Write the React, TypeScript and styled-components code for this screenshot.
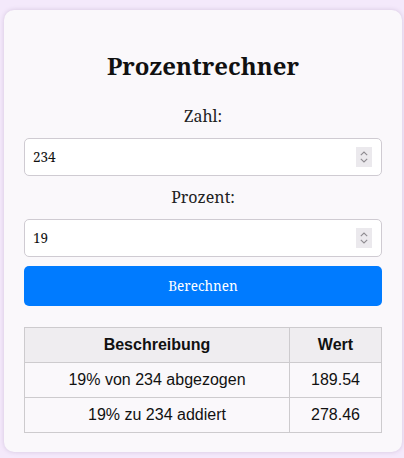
import React, { useState } from 'react';
import styled, { createGlobalStyle } from 'styled-components';

const serif = `"Noto Serif", "DejaVu Serif", serif`;

const GlobalStyle = createGlobalStyle`
  html, body {
    margin: 0;
    padding: 0;
    background-color: #f4e9fb;
    font-family: ${serif};
  }
`;

const Page = styled.div`
  padding: 10px 2px 6px 4px;
`;

const Card = styled.div`
  width: 358px;
  padding: 20px 20px 19px;
  background-color: #faf8fb;
  border-radius: 10px;
  box-shadow: 0 0 4px rgba(120, 90, 140, 0.25);
  display: flex;
  flex-direction: column;
`;

const Title = styled.h1`
  margin: 21px 0 25px;
  font-size: 24px;
  line-height: 30px;
  text-align: center;
  color: #111;
`;

const Label = styled.label<{ $first?: boolean }>`
  display: block;
  text-align: center;
  font-size: 16px;
  line-height: 20px;
  color: #222;
  margin: ${p => (p.$first ? '0 0 12px' : '11px 0 12px')};
`;

const InputBox = styled.div`
  display: flex;
  align-items: center;
  height: 38px;
  box-sizing: border-box;
  border: 1px solid #cfcbd2;
  border-radius: 5px;
  background: #fff;
  padding: 0 9px 0 8px;
`;

const NumberInput = styled.input`
  flex: 1;
  border: none;
  outline: none;
  background: transparent;
  font-family: ${serif};
  font-size: 13.5px;
  color: #111;
  padding: 0;
  -moz-appearance: textfield;
  &::-webkit-outer-spin-button,
  &::-webkit-inner-spin-button {
    -webkit-appearance: none;
    margin: 0;
  }
`;

const Spinner = styled.div`
  width: 16px;
  height: 20px;
  background: #ebe9ed;
  display: flex;
  flex-direction: column;
  align-items: center;
  justify-content: center;
  gap: 2px;
`;

const Button = styled.button`
  margin-top: 9px;
  height: 40px;
  border: none;
  border-radius: 5px;
  background-color: #007bff;
  color: #fff;
  font-family: ${serif};
  font-size: 13.5px;
  cursor: pointer;
`;

const Table = styled.table`
  margin-top: 21px;
  width: 100%;
  border-collapse: collapse;
  font-family: "Liberation Sans", Arial, sans-serif;
  font-size: 16px;
  color: #111;
`;

const Th = styled.th`
  background: #efedf0;
  border: 1px solid #cdcbce;
  height: 34px;
  padding: 0 8px;
  font-weight: bold;
  text-align: center;
`;

const Td = styled.td`
  border: 1px solid #cdcbce;
  height: 34px;
  padding: 0 8px;
  text-align: center;
  background: #faf8fb;
`;

const Chevrons = () => (
  <Spinner>
    <svg width="8" height="5" viewBox="0 0 8 5">
      <path d="M0.8 4.2 L4 1 L7.2 4.2" fill="none" stroke="#8e8b90" strokeWidth="1.1" />
    </svg>
    <svg width="8" height="5" viewBox="0 0 8 5">
      <path d="M0.8 0.8 L4 4 L7.2 0.8" fill="none" stroke="#8e8b90" strokeWidth="1.1" />
    </svg>
  </Spinner>
);

const fmt = (n: number) => n.toFixed(2);

export default function App() {
  const [zahl, setZahl] = useState('234');
  const [prozent, setProzent] = useState('19');
  const [res, setRes] = useState({ z: 234, p: 19 });

  const minus = res.z - (res.z * res.p) / 100;
  const plus = res.z + (res.z * res.p) / 100;

  return (
    <Page>
      <GlobalStyle />
      <Card>
        <Title>Prozentrechner</Title>
        <Label $first htmlFor="zahl">Zahl:</Label>
        <InputBox>
          <NumberInput id="zahl" type="number" value={zahl} onChange={e => setZahl(e.target.value)} />
          <Chevrons />
        </InputBox>
        <Label htmlFor="prozent">Prozent:</Label>
        <InputBox>
          <NumberInput id="prozent" type="number" value={prozent} onChange={e => setProzent(e.target.value)} />
          <Chevrons />
        </InputBox>
        <Button onClick={() => setRes({ z: parseFloat(zahl) || 0, p: parseFloat(prozent) || 0 })}>
          Berechnen
        </Button>
        <Table>
          <thead>
            <tr>
              <Th>Beschreibung</Th>
              <Th style={{ width: 75 }}>Wert</Th>
            </tr>
          </thead>
          <tbody>
            <tr>
              <Td>{res.p}% von {res.z} abgezogen</Td>
              <Td>{fmt(minus)}</Td>
            </tr>
            <tr>
              <Td>{res.p}% zu {res.z} addiert</Td>
              <Td>{fmt(plus)}</Td>
            </tr>
          </tbody>
        </Table>
      </Card>
    </Page>
  );
}
